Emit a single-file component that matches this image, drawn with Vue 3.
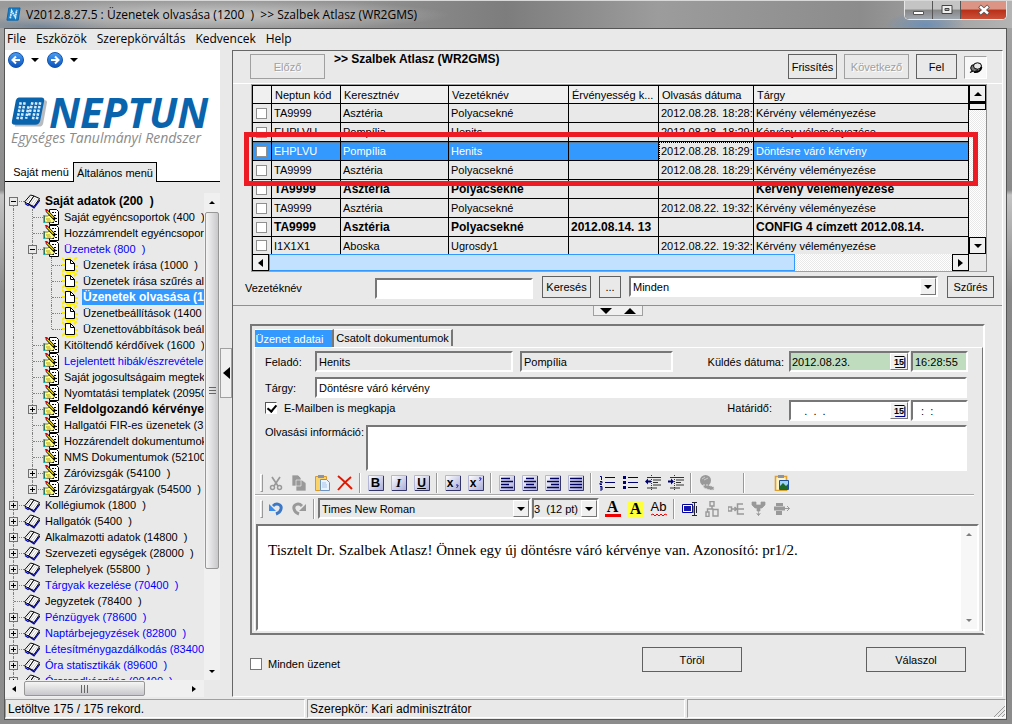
<script setup>
import { ref } from 'vue'

const menus = ['File', 'Eszközök', 'Szerepkörváltás', 'Kedvencek', 'Help']

const tree = [
  { l: 0, t: 'Saját adatok (200  )', box: '-', bold: true },
  { l: 1, t: 'Saját egyéncsoportok (400  )' },
  { l: 1, t: 'Hozzámrendelt egyéncsoportok (600  )' },
  { l: 1, t: 'Üzenetek (800  )', box: '-', blue: true },
  { l: 2, t: 'Üzenetek írása (1000  )' },
  { l: 2, t: 'Üzenetek írása szűrés alapján (1100  )' },
  { l: 2, t: 'Üzenetek olvasása (1200  )', bold: true, sel: true },
  { l: 2, t: 'Üzenetbeállítások (1400  )' },
  { l: 2, t: 'Üzenettovábbítások beállítása (1500  )', last: true },
  { l: 1, t: 'Kitöltendő kérdőívek (1600  )' },
  { l: 1, t: 'Lejelentett hibák/észrevételek (1700  )', blue: true },
  { l: 1, t: 'Saját jogosultságaim megtekintése (1750  )' },
  { l: 1, t: 'Nyomtatási templatek (20950  )' },
  { l: 1, t: 'Feldolgozandó kérvények (21000  )', box: '+', bold: true },
  { l: 1, t: 'Hallgatói FIR-es üzenetek (32000  )' },
  { l: 1, t: 'Hozzárendelt dokumentumok (52000  )' },
  { l: 1, t: 'NMS Dokumentumok (52100  )' },
  { l: 1, t: 'Záróvizsgák (54100  )', box: '+' },
  { l: 1, t: 'Záróvizsgatárgyak (54500  )', box: '+', last: true },
  { l: 0, t: 'Kollégiumok (1800  )', box: '+' },
  { l: 0, t: 'Hallgatók (5400  )', box: '+' },
  { l: 0, t: 'Alkalmazotti adatok (14800  )', box: '+' },
  { l: 0, t: 'Szervezeti egységek (28000  )', box: '+' },
  { l: 0, t: 'Telephelyek (55800  )', box: '+' },
  { l: 0, t: 'Tárgyak kezelése (70400  )', box: '+', blue: true },
  { l: 0, t: 'Jegyzetek (78400  )' },
  { l: 0, t: 'Pénzügyek (78600  )', box: '+', blue: true },
  { l: 0, t: 'Naptárbejegyzések (82800  )', box: '+', blue: true },
  { l: 0, t: 'Létesítménygazdálkodás (83400  )', box: '+', blue: true },
  { l: 0, t: 'Óra statisztikák (89600  )', box: '+', blue: true },
  { l: 0, t: 'Órarendkészítés (90400  )', box: '+', blue: true }
]
const treeIcons = ['#i-book', '#i-form', '#i-page']

const columns = ['Neptun kód', 'Keresztnév', 'Vezetéknév', 'Érvényesség k...', 'Olvasás dátuma', 'Tárgy']
const ta = ['TA9999', 'Asztéria', 'Polyacsekné']
const rows = [
  { c: [...ta, '', '2012.08.28. 18:28:', 'Kérvény véleményezése'] },
  { c: ['EHPLVU', 'Pompília', 'Henits', '', '2012.08.28. 18:29:', 'Kérvény véleményezése'] },
  { c: ['EHPLVU', 'Pompília', 'Henits', '', '2012.08.28. 18:29:', 'Döntésre váró kérvény'], sel: true },
  { c: [...ta, '', '2012.08.28. 18:29:', 'Kérvény véleményezése'] },
  { c: [...ta, '', '', 'Kérvény véleményezése'], bold: true },
  { c: [...ta, '', '2012.08.22. 19:32:', 'Kérvény véleményezése'] },
  { c: [...ta, '2012.08.14. 13', '', 'CONFIG 4 címzett 2012.08.14.'], bold: true },
  { c: ['I1X1X1', 'Aboska', 'Ugrosdy1', '', '2012.08.22. 19:32:', 'Kérvény véleményezése'] }
]

const tools = [
  ['cut', 'copy', 'paste', 'delete'],
  ['bold', 'italic', 'underline'],
  ['sub', 'sup'],
  ['left', 'center', 'right', 'justify'],
  ['ol', 'ul', 'outdent', 'indent'],
  ['globe']
]
const letters = { bold: 'B', italic: 'I', underline: 'U', sub: 'x', sup: 'x', color: 'A', mark: 'A', spell: 'Ab' }
const insertTools = ['field', 'split', 'merge', 'down', 'next']

const lastName = ref('')
const subject = ref('Döntésre váró kérvény')
const byMail = ref(true)
const allMessages = ref(false)
const message = ref('Tisztelt Dr. Szalbek Atlasz! Önnek egy új döntésre váró kérvénye van. Azonosító: pr1/2.')
</script>

<template>
  <div class="window">
    <svg class="defs" aria-hidden="true">
      <linearGradient id="g-blue" x1="0" y1="0" x2="0" y2="1">
        <stop offset="0" stop-color="#4aa0f5" /><stop offset="1" stop-color="#0a50b8" />
      </linearGradient>
      <linearGradient id="g-key" x1="0" y1="0" x2="1" y2="1">
        <stop offset="0" stop-color="#ffffff" /><stop offset="1" stop-color="#a9abd6" />
      </linearGradient>
      <symbol id="i-book" viewBox="0 0 16 16">
        <path d="M1 10.500l3 2 1-1 5 3.300L16 7" fill="none" stroke="#0000c0" stroke-width="1.300" />
        <path d="M.5 9L6.500 2l3.500 1-5.500 8z" fill="#fff" stroke="#000" />
        <path d="M4.500 11L10 3l5.500 2.500L10 13.500z" fill="#fff" stroke="#000" />
        <path d="M6.500 11l5-6.500M8.500 12l5-6.500M3 9l4-5.500" stroke="#b0b0b0" stroke-width=".7" />
      </symbol>
      <symbol id="i-form" viewBox="0 0 16 16">
        <path d="M6.500.5h7l2 2v13h-9z" fill="#fff" stroke="#000" />
        <path d="M9 3.500h4M11 6.500h3M12 9.500h2M9 13.500h2M12 12.500h2" stroke="#000" stroke-dasharray="2 1" />
        <path d="M0 6h2v8H0z" fill="#00d8e0" />
        <path d="M1.500 7h3l2-1 3 2h2l1 1.500-1 1v1.500l-2 1.500h-5l-3-.5z" fill="#ffff78" stroke="#000" stroke-width=".5" />
        <path d="M3.500 1.500l8.500 9" stroke="#000" stroke-width="2.600" />
        <path d="M3.500 1.500l7 7.400" stroke="#ffe400" stroke-width="1.200" />
        <path d="M2.500 0l2 2.200" stroke="#e00000" stroke-width="2" />
        <path d="M3 10h4M4 12h4" stroke="#806000" stroke-width=".6" />
      </symbol>
      <symbol id="i-page" viewBox="0 0 16 16">
        <path d="M0 1l3 3M8 0v3M15 0l-3 3M0 8h3M0 15l3-3M16 9h-3M16 15l-3-3M4 15h9M5 1l3 1" stroke="#fff000" stroke-width="1.800" />
        <path d="M3.500 2.500h5l4 4v7h-9z" fill="#fff" stroke="#000" />
        <path d="M8.500 2.500v4h4" fill="none" stroke="#000" />
      </symbol>
      <symbol id="i-arrow" viewBox="0 0 16 16">
        <circle cx="8" cy="8" r="7.500" fill="url(#g-blue)" stroke="#1455b0" />
        <path d="M12 8H4.500M8 4.500L4.500 8 8 11.500" fill="none" stroke="#fff" stroke-width="2" />
      </symbol>
      <symbol id="i-cal" viewBox="0 0 12 12">
        <path d="M1 .5h10M2 11.500h9.500V1" fill="none" stroke="#000" />
        <path d="M11.500 2v9.500H2" fill="none" stroke="#000090" />
      </symbol>
      <symbol id="t-key" viewBox="0 0 16 16">
        <path d="M.5.500h15v15H.5z" fill="url(#g-key)" stroke="#b4b6d8" />
        <path d="M15.500 1v14.500H1" fill="none" stroke="#34346c" />
      </symbol>
      <symbol id="t-cut" viewBox="0 0 16 16">
        <path d="M4 2l6 9M12 2L6 11" stroke="#999" stroke-width="1.700" />
        <circle cx="4.500" cy="12.500" r="2" fill="none" stroke="#999" stroke-width="1.500" />
        <circle cx="11.500" cy="12.500" r="2" fill="none" stroke="#999" stroke-width="1.500" />
      </symbol>
      <symbol id="t-copy" viewBox="0 0 16 16">
        <path d="M1 0h6l3 3v8H1zM5 5h6l4 3v8H5z" fill="#999" stroke="#e9e9e9" stroke-width=".7" />
      </symbol>
      <symbol id="t-paste" viewBox="0 0 16 16">
        <path d="M1.500 1.500h11v14h-11z" fill="#fbd36b" stroke="#d99a2b" />
        <path d="M4 0h6v3H4z" fill="#8a93a8" />
        <path d="M6.500 4.500h6l3 3v8h-9z" fill="#eaf4ff" stroke="#6d93c4" />
        <path d="M8 8h4M8 10h5M8 12h5" stroke="#a8c3e6" />
      </symbol>
      <symbol id="t-delete" viewBox="0 0 16 16">
        <path d="M1 1c5 4 10 9 14 13M14 2C9 6 5 10 1 15" fill="none" stroke="#e01800" stroke-width="2" />
      </symbol>
      <symbol id="t-bold" viewBox="0 0 16 16"><use href="#t-key" /></symbol>
      <symbol id="t-italic" viewBox="0 0 16 16"><use href="#t-key" /></symbol>
      <symbol id="t-underline" viewBox="0 0 16 16"><use href="#t-key" /></symbol>
      <symbol id="t-sub" viewBox="0 0 16 16"><use href="#t-key" /><path d="M11 10h2v1l-1.500 2" fill="none" stroke="#2020c0" /></symbol>
      <symbol id="t-sup" viewBox="0 0 16 16"><use href="#t-key" /><path d="M11 3h2v1l-1.500 2" fill="none" stroke="#2020c0" /></symbol>
      <symbol id="t-left" viewBox="0 0 16 16"><use href="#t-key" /><path d="M2 3.500h9M2 6.500h12M2 9.500h8M2 12.500h12" stroke="#000060" stroke-width="1.500" /></symbol>
      <symbol id="t-center" viewBox="0 0 16 16"><use href="#t-key" /><path d="M4 3.500h8M2 6.500h12M4 9.500h8M2 12.500h12" stroke="#000060" stroke-width="1.500" /></symbol>
      <symbol id="t-right" viewBox="0 0 16 16"><use href="#t-key" /><path d="M5 3.500h9M2 6.500h12M6 9.500h8M2 12.500h12" stroke="#000060" stroke-width="1.500" /></symbol>
      <symbol id="t-justify" viewBox="0 0 16 16"><use href="#t-key" /><path d="M2 3.500h12M2 6.500h12M2 9.500h12M2 12.500h12" stroke="#000060" stroke-width="1.500" /></symbol>
      <symbol id="t-ol" viewBox="0 0 16 16"><path d="M6 2.500h10M6 7.500h10M6 12.500h10" stroke="#000070" /><path d="M1 1.500h1.500V5M1 6.500h2v1.500H1v1.500h2M1 11.500h2v3.500H1M1 13h2" fill="none" stroke="#000070" /></symbol>
      <symbol id="t-ul" viewBox="0 0 16 16"><path d="M6 2.500h10M6 7.500h10M6 12.500h10" stroke="#000070" /><path d="M1 1h3v3H1zM1 6h3v3H1zM1 11h3v3H1z" fill="#000070" /></symbol>
      <symbol id="t-lines" viewBox="0 0 16 16"><path d="M2 2.500h14M8 5h8M8 7.500h5M8 10h8M2 13h10" stroke="#333" /><path d="M6.500 0v15" stroke="#333" stroke-dasharray="1 1" /></symbol>
      <symbol id="t-outdent" viewBox="0 0 16 16"><use href="#t-lines" /><path d="M0 6.500l3-3v2h3v2H3v2z" fill="#000070" /></symbol>
      <symbol id="t-indent" viewBox="0 0 16 16"><use href="#t-lines" /><path d="M6 6.500l-3-3v2H0v2h3v2z" fill="#000070" /></symbol>
      <symbol id="t-globe" viewBox="0 0 16 16">
        <circle cx="6.500" cy="5.500" r="5.500" fill="#999" />
        <path d="M3 4l3-2M5 5l4-2" stroke="#ccc" />
        <path d="M4 10h5l6 2v3h-4l-6-2z" fill="#999" stroke="#ddd" stroke-dasharray="2 1" />
      </symbol>
      <symbol id="t-picture" viewBox="0 0 16 16">
        <path d="M1.500 1.500h11v14h-11z" fill="#fff3c8" stroke="#e0a030" stroke-width="1.600" />
        <path d="M4 0h6v3H4z" fill="#8a93a8" />
        <path d="M5.500 5.500h9v9h-9z" fill="#9fd4f5" stroke="#1d4f9c" />
        <path d="M6 14v-3l3-3 3 3 2-2v5z" fill="#1f6a2a" />
      </symbol>
      <symbol id="t-undo" viewBox="0 0 16 16"><path d="M5 5c4-4 9-1 8 3-.5 2.500-2 4-5 5" fill="none" stroke="#3c78c8" stroke-width="3" /><path d="M1 3v7h7z" fill="#3c8be8" /></symbol>
      <symbol id="t-redo" viewBox="0 0 16 16"><path d="M11 5C7 1 2 4 3 8c.5 2.500 2 4 5 5" fill="none" stroke="#999" stroke-width="3" /><path d="M15 3v7H8z" fill="#999" /></symbol>
      <symbol id="t-color" viewBox="0 0 16 16"><path d="M0 13h16v3H0z" fill="#f00000" /></symbol>
      <symbol id="t-mark" viewBox="0 0 16 16"><path d="M0 0h16v16H0z" fill="#ffff3c" /></symbol>
      <symbol id="t-spell" viewBox="0 0 16 16"><path d="M0 14l2-1 2 2 2-2 2 2 2-2 2 2 2-2 2 1" fill="none" stroke="#f00000" /></symbol>
      <symbol id="t-field" viewBox="0 0 16 16">
        <path d="M.5 3.500h10v8H.5z" fill="#fff" stroke="#0000a0" /><path d="M2 5h7v5H2z" fill="#1414b0" />
        <path d="M10 1.500h5M12.500 2v12M10 14.500h5M11 5v7M14.500 5v7" stroke="#223" fill="none" />
      </symbol>
      <symbol id="t-split" viewBox="0 0 16 16"><path d="M5 .5h4V5H5zM7 5v3M2.500 11V8h6M1 11h3v4.500H1zM8 8.500h5V15H8z" fill="none" stroke="#999" stroke-width="1.400" /></symbol>
      <symbol id="t-merge" viewBox="0 0 16 16"><path d="M0 6h3.500v4H0zM4 8h5M6.500 6l2 2-2 2M15 3H9.500v10H16M10 8h6" fill="none" stroke="#999" stroke-width="1.500" /></symbol>
      <symbol id="t-down" viewBox="0 0 16 16"><path d="M1 1h4v3h5V1h4v3l-3 3H9v3H6V7H4L1 4zM7.500 9v6M5.500 12.500l2 2 2-2" fill="#999" stroke="#999" stroke-width=".7" /></symbol>
      <symbol id="t-next" viewBox="0 0 16 16"><path d="M2 2h7v3H2zM0 5.500h11v4H0zM2 10h6v4H2z" fill="#999" /><path d="M10 7.500h5.500M13 5l2.500 2.500L13 10" fill="none" stroke="#999" /></symbol>
    </svg>

    <header class="titlebar">
      <svg class="app-icon" viewBox="0 0 16 16" aria-hidden="true">
        <path d="M3 1h12l-2 13H1z" fill="#1a7fc8" stroke="#0c63a8" />
        <path d="M4.500 12L6 4l4 7 1.500-8" fill="none" stroke="#d8efff" stroke-width="1.800" stroke-dasharray="2 .6" />
      </svg>
      <h1>V2012.8.27.5 : Üzenetek olvasása (1200&nbsp; ) &nbsp;&gt;&gt; Szalbek Atlasz (WR2GMS)</h1>
      <div class="controls">
        <button aria-label="Kis méret"><svg viewBox="0 0 12 12"><path d="M.5 7.500h10v3H.5z" fill="#fff" stroke="#555" /></svg></button>
        <button aria-label="Teljes méret"><svg viewBox="0 0 12 12"><path d="M1 1.500h10v8H1zM4 4.500h4v2H4z" fill="#eee" fill-rule="evenodd" stroke="#444" /></svg></button>
        <button class="close" aria-label="Bezárás"><svg viewBox="0 0 12 12"><path d="M1.500 2l9 8M10.500 2l-9 8" stroke="#555" stroke-width="4" /><path d="M2 2.500l8 7M10 2.500l-8 7" stroke="#fff" stroke-width="2.400" /></svg></button>
      </div>
    </header>

    <div class="client">
      <nav class="menubar">
        <a v-for="m in menus" :key="m" href="#">{{ m }}</a>
      </nav>

      <div class="main">
        <aside class="left">
          <div class="brand">
            <div class="history">
              <button aria-label="Vissza"><svg viewBox="0 0 16 16"><use href="#i-arrow" /></svg></button>
              <i class="tri down"></i>
              <button aria-label="Előre"><svg class="flip" viewBox="0 0 16 16"><use href="#i-arrow" /></svg></button>
              <i class="tri down"></i>
            </div>
            <div class="logo">
              <svg viewBox="0 0 37 32" aria-hidden="true">
                <path d="M10 4h25q2 0 2 2l-4 22q-1 3-4 3H4z" fill="#b8bcc0" />
                <path d="M8 1h23q4 0 3 4l-4 20q-1 4-5 4H4q-4 0-3-4L5 4q1-3 3-3z" fill="#0a64ad" />
                <path d="M10 6L6.500 24M14 6l-3.500 18M18 10l-2.500 13M22 6l-3.500 14M26 6l-3.500 18M30 6l-3.500 18" stroke="#d4ecff" stroke-width="2.600" stroke-dasharray="2.600 1.200" />
              </svg>
              <strong>NEPTUN</strong>
            </div>
            <em>Egységes Tanulmányi Rendszer</em>
            <div class="left-tabs">
              <button>Saját menü</button><button class="on">Általános menü</button>
            </div>
          </div>
          <div class="tree-box">
            <ul class="tree">
              <li v-for="(n, i) in tree" :key="i" :class="['l' + n.l, { first: i === 0, last: n.last }]">
                <span v-if="n.l > 0" class="guide"></span>
                <span v-if="n.l > 1" class="guide"></span>
                <span class="node"><b v-if="n.box" :class="{ plus: n.box === '+' }"></b></span>
                <svg viewBox="0 0 16 16" aria-hidden="true"><use :href="treeIcons[n.l]" /></svg>
                <a href="#" :class="{ bold: n.bold, blue: n.blue, sel: n.sel }">{{ n.t }}</a>
              </li>
            </ul>
            <div class="vbar">
              <i class="tri up small"></i>
              <div class="thumb"><i class="grip"></i></div>
              <div class="rest"></div>
              <i class="tri down small"></i>
            </div>
            <div class="hbar">
              <i class="tri lt small"></i>
              <div class="thumb"><i class="grip"></i></div>
              <div class="rest"></div>
              <i class="tri rt small"></i>
            </div>
          </div>
        </aside>

        <div class="gutter"><button aria-label="Panel elrejtése"><i class="tri lt"></i></button></div>

        <main class="right">
          <section class="upper">
            <div class="head">
              <button class="btn prev" disabled>Előző</button>
              <h2>&gt;&gt; Szalbek Atlasz (WR2GMS)</h2>
              <button class="btn refresh">Frissítés</button>
              <button class="btn next" disabled>Következő</button>
              <button class="btn up-btn">Fel</button>
              <button class="pin" aria-label="Rögzítés">
                <svg viewBox="0 0 14 14"><path d="M1 11.500l3-1.500" stroke="#000" stroke-width="1.300" /><ellipse cx="5.500" cy="7" rx="3.800" ry="3.500" fill="#777" stroke="#000" /><ellipse cx="8.500" cy="5" rx="4" ry="3.200" fill="#e8e8e8" stroke="#000" /><path d="M5 11c4 1 7-2 7.500-5" fill="none" stroke="#000" stroke-width="1.800" /></svg>
              </button>
            </div>

            <div class="grid">
              <table>
                <colgroup><col class="c0"><col class="c1"><col class="c2"><col class="c3"><col class="c4"><col class="c5"><col></colgroup>
                <thead>
                  <tr><th></th><th v-for="c in columns" :key="c">{{ c }}</th></tr>
                </thead>
                <tbody>
                  <tr v-for="(r, i) in rows" :key="i" :class="{ bold: r.bold, sel: r.sel }">
                    <td class="pick"><input type="checkbox" :aria-label="r.c[0]"></td>
                    <td v-for="(c, j) in r.c" :key="j" :class="{ focus: r.sel && j === 4 }">{{ c }}</td>
                  </tr>
                </tbody>
              </table>
              <div class="gv">
                <button aria-label="Fel görget"><i class="tri up"></i></button>
                <div class="gthumb"></div>
                <div class="rest"></div>
                <button aria-label="Le görget"><i class="tri down"></i></button>
              </div>
              <div class="gh">
                <button aria-label="Balra görget"><i class="tri lt"></i></button>
                <div class="gthumb"></div>
                <div class="rest"></div>
                <button aria-label="Jobbra görget"><i class="tri rt"></i></button>
              </div>
              <div class="frame"></div>
            </div>

            <div class="search">
              <label for="lastname">Vezetéknév</label>
              <input id="lastname" v-model="lastName" class="field" type="text">
              <button class="btn find">Keresés</button>
              <button class="btn more">...</button>
              <span class="combo wide">
                <select aria-label="Szűrő"><option>Minden</option></select><span class="drop"><i class="tri down"></i></span>
              </span>
              <button class="btn filter">Szűrés</button>
            </div>
          </section>

          <button class="splitter" aria-label="Panel méretezése"><i class="tri down big"></i><i class="tri up big"></i></button>

          <section class="group">
            <div class="tabs"><button class="on">Üzenet adatai</button><button>Csatolt dokumentumok</button></div>
            <div class="page">
              <div class="row dated">
                <label for="sender">Feladó:</label>
                <input id="sender" class="field s1" value="Henits" readonly>
                <input class="field s2" value="Pompília" aria-label="Keresztnév" readonly>
                <label for="sent" class="end">Küldés dátuma:</label>
                <span class="date green"><input id="sent" value="2012.08.23." readonly><button aria-label="Naptár"><svg viewBox="0 0 12 12"><use href="#i-cal" /></svg><span>15</span></button></span>
                <input class="field time green" value="16:28:55" aria-label="Küldés ideje" readonly>
              </div>
              <div class="row">
                <label for="subject">Tárgy:</label>
                <input id="subject" v-model="subject" class="field grow">
              </div>
              <div class="row dated third">
                <input id="mail" v-model="byMail" class="check" type="checkbox">
                <label for="mail" class="auto">E-Mailben is megkapja</label>
                <label for="due" class="end">Határidő:</label>
                <span class="date"><input id="due" value="    .  .  ."><button aria-label="Naptár"><svg viewBox="0 0 12 12"><use href="#i-cal" /></svg><span>15</span></button></span>
                <input class="field time" value="  :  :" aria-label="Határidő ideje">
              </div>
              <div class="row info">
                <label for="info">Olvasási információ:</label>
                <textarea id="info" class="field grow"></textarea>
              </div>

              <div class="toolbar">
                <i class="handle"></i>
                <template v-for="(g, i) in tools" :key="i">
                  <i v-if="i" class="sep"></i>
                  <button v-for="t in g" :key="t" :class="['tool', 'is-' + t]" :aria-label="t"><svg viewBox="0 0 16 16"><use :href="'#t-' + t" /></svg><span v-if="letters[t]">{{ letters[t] }}</span></button>
                </template>
                <i class="sep far"></i>
                <button class="tool pic" aria-label="Kép"><svg viewBox="0 0 16 16"><use href="#t-picture" /></svg></button>
              </div>
              <div class="toolbar second">
                <i class="handle"></i>
                <button class="tool" aria-label="Visszavonás"><svg viewBox="0 0 16 16"><use href="#t-undo" /></svg></button>
                <button class="tool" aria-label="Ismét"><svg viewBox="0 0 16 16"><use href="#t-redo" /></svg></button>
                <i class="sep"></i>
                <span class="combo face"><select aria-label="Betűtípus"><option>Times New Roman</option></select><span class="drop"><i class="tri down"></i></span></span>
                <span class="combo size"><select aria-label="Méret"><option>3&nbsp; (12 pt)</option></select><span class="drop"><i class="tri down"></i></span></span>
                <button v-for="t in ['color', 'mark', 'spell']" :key="t" :class="['tool', 'is-' + t]" :aria-label="t"><svg viewBox="0 0 16 16"><use :href="'#t-' + t" /></svg><span>{{ letters[t] }}</span></button>
                <i class="sep"></i>
                <button v-for="t in insertTools" :key="t" class="tool" :aria-label="t"><svg viewBox="0 0 16 16"><use :href="'#t-' + t" /></svg></button>
              </div>

              <div class="editor">
                <textarea v-model="message" aria-label="Üzenet szövege"></textarea>
                <div class="evbar"><i class="tri up small"></i><i class="tri down small"></i></div>
              </div>
            </div>
          </section>

          <footer class="actions">
            <input id="all" v-model="allMessages" class="check" type="checkbox">
            <label for="all">Minden üzenet</label>
            <button class="btn big">Töröl</button>
            <button class="btn big">Válaszol</button>
          </footer>
        </main>
      </div>

      <div class="status">
        <span class="s-a">Letöltve 175 / 175 rekord.</span>
        <span class="s-b">Szerepkör: Kari adminisztrátor</span>
        <span class="s-c"><svg viewBox="0 0 12 12" aria-hidden="true"><path d="M12 1L1 12M12 5l-7 7M12 9l-3 3" stroke="#999" /></svg></span>
      </div>
    </div>
  </div>
</template>

<style>
body { margin: 0; }
</style>

<style scoped>
* { box-sizing: border-box; }
.window {
  height: 100vh;
  display: flex;
  flex-direction: column;
  padding: 0 5px 4px 4px;
  overflow: hidden;
  color: #000;
  font: 11px/16px "Liberation Sans", Arial, sans-serif;
  background: linear-gradient(180deg, #929292 0, #a2a2a2 28px, #8a8a8a 190px, #c4c4c4 195px, #888 290px, #8c8c8c 100%);
}
button, input, select, textarea { font: inherit; color: inherit; margin: 0; padding: 0; border: 0; border-radius: 0; background: none; outline: 0; }
.defs { position: absolute; width: 0; height: 0; }
h1, h2 { margin: 0; font-weight: normal; }
a { color: inherit; text-decoration: none; }

.tri { width: 0; height: 0; flex: none; border: 4px solid transparent; }
.tri.down { border-top-color: #000; border-bottom: 0; }
.tri.up { border-bottom-color: #000; border-top: 0; }
.tri.lt { border-right: 5px solid #000; border-left: 0; }
.tri.rt { border-left: 5px solid #000; border-right: 0; }
.tri.big { border-left-width: 6px; border-right-width: 6px; border-top-width: 6px; }
.tri.big.up { border-top-width: 0; border-bottom-width: 6px; }
.tri.small { border-width: 3px; }
.tri.small.down { border-bottom: 0; }
.tri.small.up { border-top: 0; }
.tri.small.lt { border-left: 0; border-right-width: 4px; }
.tri.small.rt { border-right: 0; border-left-width: 4px; }

.titlebar {
  flex: none;
  height: 28px;
  margin: 0 -5px 0 -4px;
  padding: 0 5px 0 6px;
  display: flex;
  align-items: center;
  background:
    radial-gradient(ellipse 40px 14px at 925px 24px, #6d8fb5, transparent),
    radial-gradient(ellipse 240px 16px at 210px 14px, #c8c8c8, transparent),
    radial-gradient(ellipse 70px 12px at 40px 26px, #76889a, transparent),
    linear-gradient(90deg, #9a9a9a, #929292 35%, #7d7d7d 50%, #9c9c9c 65%, #8c8c8c 85%, #b4b4b4);
  border-top: 1px solid #d8d8d8;
}
.app-icon { width: 15px; height: 15px; margin-right: 5px; }
.titlebar h1, .menubar { font-family: "Open Sans", "Noto Sans", sans-serif; font-size: 12px; }
.titlebar h1 { flex: 1; }
.controls { align-self: flex-start; display: flex; height: 19px; border: 1px solid #e6e6e6; border-top: 0; border-radius: 0 0 5px 5px; background: #555; overflow: hidden; gap: 1px; }
.controls button { width: 27px; display: grid; place-items: center; background: linear-gradient(#c4c4c4 45%, #858585 50%, #a0a8b0); }
.controls .close { width: 45px; background: linear-gradient(#dc9484 45%, #b83018 50%, #cc5038); }
.controls svg { width: 12px; height: 12px; }

.client { flex: 1; min-height: 0; display: flex; flex-direction: column; background: #e9e9e9; border: 1px solid #555; }
.menubar { flex: none; height: 21px; display: flex; gap: 10px; padding: 2px 2px 0; }
.main { flex: 1; min-height: 0; display: flex; }

.left { flex: none; width: 215px; display: flex; flex-direction: column; }
.brand { flex: none; height: 132px; background: #fff; display: flex; flex-direction: column; }
.history { display: flex; align-items: center; gap: 7px; padding: 2px 3px; height: 20px; }
.history button { height: 16px; }
.history svg { width: 16px; height: 16px; display: block; }
.history .flip { transform: scaleX(-1); }
.history .tri { margin-right: 1px; }
.logo { display: flex; align-items: center; margin: 24px 0 0 6px; height: 36px; gap: 2px; }
.logo svg { flex: none; width: 36px; height: 32px; }
.logo strong { font: italic bold 41px/36px "Open Sans", sans-serif; color: #0a64ad; }
.brand em { margin-left: 6px; font: italic 14px/16px "Open Sans", sans-serif; color: #8b8b8b; white-space: nowrap; }
.left-tabs { margin-top: auto; display: flex; align-items: flex-end; height: 20px; border-bottom: 1px solid #000; }
.left-tabs button { height: 18px; width: 68px; padding-left: 4px; white-space: nowrap; }
.left-tabs .on { width: 84px; height: 20px; padding: 0; margin-bottom: -1px; background: #e9e9e9; border: 1px solid #000; border-bottom: 0; }

.tree-box { flex: 1; min-height: 0; display: grid; grid-template: 1fr 17px / 1fr 16px; padding: 11px 0 2px; }
.tree { margin: 0; padding: 0; list-style: none; overflow: hidden; min-height: 0; min-width: 0; }
.tree li { display: flex; height: 16px; align-items: center; white-space: pre; padding-left: 4px; }
.tree svg { width: 16px; height: 16px; flex: none; margin-right: 4px; }
.guide, .node { flex: none; width: 19px; height: 16px; position: relative; }
.guide::before, .node::before { content: ""; position: absolute; left: 4px; top: 0; bottom: 0; border-left: 1px dotted #808080; }
.node::after { content: ""; position: absolute; left: 5px; right: 0; top: 8px; border-top: 1px dotted #808080; }
.node { width: 15px; }
.first .node::before { top: 8px; }
.last .node::before { bottom: 8px; }
.node b { position: absolute; z-index: 1; left: 0; top: 4px; width: 9px; height: 9px; border: 1px solid #707070; background: linear-gradient(#000, #000) center / 5px 1px no-repeat #e9e9e9; }
.node b.plus { background: linear-gradient(#000, #000) center / 5px 1px no-repeat, linear-gradient(#000, #000) center / 1px 5px no-repeat #e9e9e9; }
.tree a { padding: 0 1px; }
.tree .bold { font-weight: bold; font-size: 12px; }
.tree .blue { color: #0000ff; }
.tree .sel { background: #3399ff; color: #fff; }

.vbar, .hbar { display: flex; align-items: center; background: #f0f0f0; }
.vbar { flex-direction: column; padding: 8px 0 7px; }
.vbar .thumb { width: 14px; flex: 74; margin-top: 8px; display: grid; place-items: center; border: 1px solid #979797; border-radius: 2px; background: linear-gradient(90deg, #f5f5f5, #c8c8cc); }
.rest { flex: 1; }
.vbar .rest { flex: 21; }
.grip { width: 7px; height: 8px; background: repeating-linear-gradient(#666 0 1px, transparent 1px 3px); }
.hbar { padding: 0 8px 0 7px; }
.hbar .thumb { height: 15px; width: 121px; margin-left: 8px; display: grid; place-items: center; border: 1px solid #979797; border-radius: 2px; background: linear-gradient(#f5f5f5, #c8c8cc); }
.hbar .grip { background: repeating-linear-gradient(90deg, #666 0 1px, transparent 1px 3px); }

.gutter { flex: none; width: 12px; display: flex; align-items: flex-start; }
.gutter button { margin-top: 298px; width: 12px; height: 50px; display: grid; place-items: center; border: 1px solid #a0a0a0; background: #f0f0f0; }
.gutter .tri { border-width: 6px; border-left: 0; border-right-width: 7px; }

.right { flex: 1; min-width: 0; display: flex; flex-direction: column; margin: 0 3px 2px 0; border: 1px solid #666; border-right-color: #fff; border-bottom-color: #fff; }
.upper { flex: none; border-bottom: 1px solid #909090; padding-bottom: 5px; }
.btn { flex: none; height: 25px; border: 1px solid #606060; background: #e9e9e9; text-align: center; white-space: nowrap; }
.btn:disabled { color: #a0a0a0; border-color: #a0a0a0; text-shadow: 1px 1px #fff; }
.head { height: 33px; display: flex; padding: 3px 15px 0 17px; border-bottom: 1px solid #fff; }
.head h2 { flex: 1; margin-left: 9px; font: bold 12px/10px "Liberation Sans", Arial, sans-serif; }
.prev { width: 75px; }
.refresh { width: 49px; }
.next { width: 65px; margin: 0 7px; }
.up-btn { width: 41px; }
.pin { width: 23px; height: 23px; margin: 2px 0 0 7px; display: grid; place-items: center; background: #f8f8f8; border: 1px solid #a0a0a0; border-right-color: #fff; border-bottom-color: #fff; }
.pin svg { width: 14px; height: 14px; }

.grid { position: relative; margin: 0 15px 0 18px; display: grid; grid-template: 169px 17px / 1fr 17px; border: 1px solid #a0a0a0; border-right-color: #909090; }
table { width: 100%; height: 169px; table-layout: fixed; border-collapse: separate; border-spacing: 0; border-left: 1px solid #000; border-top: 1px solid #000; }
.c0 { width: 19px; }
.c1 { width: 69px; }
.c2 { width: 108px; }
.c3 { width: 120px; }
.c4 { width: 90px; }
.c5 { width: 95px; }
th, td { height: 19px; padding: 0 0 0 2px; border-right: 1px solid #000; border-bottom: 1px solid #000; text-align: left; white-space: nowrap; overflow: hidden; font-weight: normal; line-height: 14px; }
th { height: 18px; padding-left: 3px; background: #f0f0f0; }
tbody tr:last-child td { height: 17px; border-bottom: 0; }
.bold td { font-weight: bold; font-size: 12px; }
.sel td { background: #3399ff; color: #fff; box-shadow: inset 0 1px #5a7a9a; }
.sel td.focus { background: #e9e9e9; color: #000; outline: 1px dotted #000; outline-offset: -1px; box-shadow: none; }
.pick input { display: block; appearance: none; width: 11px; height: 11px; margin-left: 1px; background: #fff; border: 1px solid #909090; }
.gv { display: flex; flex-direction: column; }
.gh { display: flex; grid-column: 1; }
.gv .rest, .gh .rest { background: repeating-conic-gradient(#e9e9e9 0 25%, #fff 0 50%) 0 0 / 2px 2px; }
.gv button, .gh button { flex: none; width: 17px; height: 17px; display: grid; place-items: center; border: 1px solid #000; background: #f0f0f0; }
.gv .gthumb { height: 8px; border: 1px solid #000; border-top-width: 2px; background: #f0f0f0; }
.gh .gthumb { flex: 526; border: 1px solid #3399ff; background: #c2e0ff; }
.gh .rest { flex: 157; }
.frame { position: absolute; left: -8px; right: 8px; top: 47px; height: 54px; border: 5px solid #ed1c24; pointer-events: none; }

.search { display: flex; align-items: flex-start; margin: 4px 8px 0 12px; }
.search label { width: 130px; line-height: 24px; }
.search .btn { height: 22px; }
.field, .combo, .date { height: 21px; border: 2px solid; border-color: #777 #fff #fff #777; padding: 0 2px; min-width: 0; background: #fff; }
.search .field { width: 158px; margin-top: 2px; }
.find { width: 49px; margin: 0 8px 0 9px; }
.more { width: 22px; margin-right: 8px; }
.combo { position: relative; display: flex; }
.combo select { appearance: none; width: 100%; }
.combo.wide { flex: 1; }
.filter { width: 47px; margin-left: 9px; }
.drop { position: absolute; right: 0; top: 0; bottom: 0; width: 16px; display: grid; place-items: center; background: #f0f0f0; border: 1px solid #fff; border-right-color: #777; border-bottom-color: #777; pointer-events: none; }

.splitter { flex: none; align-self: center; width: 50px; height: 10px; display: flex; align-items: center; justify-content: center; gap: 12px; border: 1px solid #a0a0a0; border-top: 0; background: #f0f0f0; }

.group { flex: 1; min-height: 0; margin: 8px 17px 0 17px; display: flex; flex-direction: column; border: 2px solid; border-color: #777 #fff #777 #777; padding: 3px 0 2px 2px; }
.tabs { flex: none; display: flex; height: 18px; align-items: flex-start; padding-left: 1px; }
.tabs button { height: 17px; width: 119px; border-top: 1px solid #fff; border-right: 2px solid #777; line-height: 16px; white-space: nowrap; }
.tabs .on { width: 79px; height: 18px; padding-right: 8px; background: #3399ff; color: #fff; }
.page { flex: 1; min-height: 0; display: flex; flex-direction: column; border: 1px solid #fff; border-right-color: #777; border-bottom: 0; padding-top: 3px; }
.row { flex: none; display: flex; align-items: center; padding: 0 15px 0 10px; margin-bottom: 5px; }
.dated { padding-right: 14px; }
.row label { flex: none; width: 50px; }
.row .auto { width: auto; }
.row .end { width: auto; margin-left: auto; padding-right: 5px; }
.s1 { width: 198px; margin-right: 7px; }
.s2 { width: 153px; }
.s1, .s2 { background: #e9e9e9; }
.date { display: flex; width: 121px; padding: 0; }
.date input { flex: 1; min-width: 0; padding-left: 1px; white-space: pre; }
.date button { width: 18px; display: grid; place-items: center; background: #f0f0f0; border: 1px solid #fff; border-right-color: #777; border-bottom-color: #777; }
.date button > * { grid-area: 1 / 1; }
.date svg { width: 13px; height: 12px; }
.date button span { font: bold 9px/10px "Liberation Sans", Arial, sans-serif; }
.time { width: 57px; margin-left: 1px; }
.green { background: #bfdcbf; }
.grow { flex: 1; }
.third { align-items: flex-start; margin: -3px 0 4px; }
.third .check { margin-top: 2px; }
.third .end { padding-right: 17px; }
.check { flex: none; appearance: none; width: 12px; height: 12px; background: #fff; border: 1px solid; border-color: #555 #fff #fff #555; margin-right: 7px; }
.check:checked { position: relative; }
.check:checked::after { content: ""; position: absolute; left: 3px; top: 0; width: 4px; height: 7px; border: solid #000; border-width: 0 2px 2px 0; transform: rotate(40deg); }
.info { align-items: flex-start; margin-bottom: 0; }
.info label { width: 101px; line-height: 15px; }
.info textarea { height: 46px; resize: none; }

.toolbar { flex: none; height: 24px; display: flex; align-items: center; padding-left: 5px; margin-right: 8px; border-bottom: 1px solid #aaa; box-shadow: 0 1px #fff; }
.toolbar.second { height: 27px; border: 0; box-shadow: none; margin-bottom: 2px; }
.handle { width: 3px; height: 18px; border: 1px solid; border-color: #fff #999 #999 #fff; margin-right: 1px; }
.tool { flex: none; width: 23px; height: 18px; display: grid; place-items: center; }
.tool > * { grid-area: 1 / 1; }
.tool svg { width: 16px; height: 16px; display: block; overflow: visible; }
.tool span { font: bold 12px/14px "Liberation Sans", Arial, sans-serif; }
.is-bold span { font-size: 13px; }
.is-italic span { font: italic bold 13px/14px "Liberation Serif", serif; }
.is-underline span { text-decoration: underline; }
.is-sub span, .is-sup span { padding-right: 5px; }
.is-color span, .is-mark span { font: bold 16px/16px "Liberation Serif", serif; }
.is-color span { align-self: start; line-height: 13px; }
.is-spell span { font-size: 13px; font-weight: normal; align-self: start; }
.sep { flex: none; width: 2px; height: 20px; margin: 0 3px; border-left: 1px solid #999; border-right: 1px solid #fff; }
.sep.far { margin-left: 25px; }
.pic { margin-left: 22px; }
.combo.face { width: 213px; background: #e9e9e9; }
.combo.size { width: 67px; margin: 0 2px 0 1px; background: #e9e9e9; padding: 0; }

.editor { flex: 1; min-height: 0; display: flex; margin: 0 3px 0 1px; border: 2px solid; border-color: #777 #fff #fff #777; background: #fff; }
.editor textarea { flex: 1; resize: none; padding: 14px 10px; overflow: hidden; font: 15px/20px "Liberation Serif", "Times New Roman", serif; }
.evbar { width: 16px; display: flex; flex-direction: column; align-items: center; justify-content: space-between; padding: 7px 0; background: #f0f0f0; opacity: .5; }

.actions { flex: none; display: flex; align-items: center; height: 61px; padding: 0 36px 12px 17px; }
.actions label { flex: 1; margin-top: 8px; }
.actions .check { margin: 8px 6px 0 0; border-color: #777; }
.btn.big { width: 100px; }
.btn.big + .btn.big { margin-left: 124px; }

.status { flex: none; height: 20px; display: flex; gap: 2px; font-size: 12px; line-height: 18px; padding-bottom: 1px; }
.status span { border: 1px solid #a0a0a0; border-right-color: #fff; border-bottom-color: #fff; padding-left: 2px; }
.s-a { width: 300px; }
.s-b { width: 378px; }
.s-c { flex: 1; display: flex; justify-content: flex-end; align-items: flex-end; }
.s-c svg { width: 12px; height: 12px; }
</style>
